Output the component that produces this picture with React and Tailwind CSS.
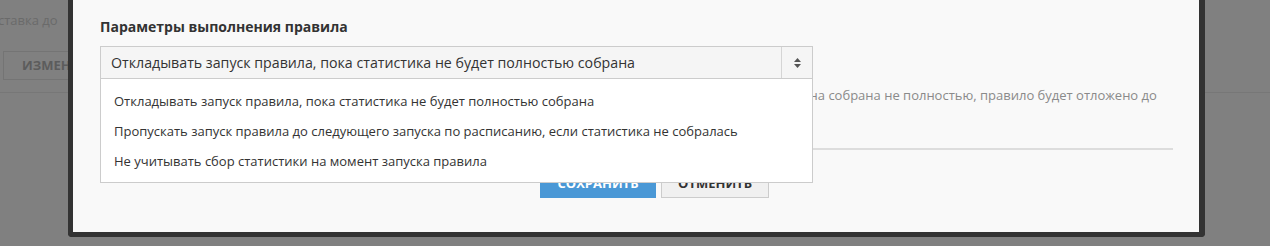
export default function App() {
	const options = [
		"Откладывать запуск правила, пока статистика не будет полностью собрана",
		"Пропускать запуск правила до следующего запуска по расписанию, если статистика не собралась",
		"Не учитывать сбор статистики на момент запуска правила",
	];

	return (
		<div className="relative w-full h-[246px] overflow-hidden bg-[#808080] font-['Open_Sans',sans-serif]">
			{/* Page under the overlay */}
			<div className="pt-[10px]">
				<div className="text-[13px] leading-[20px] text-[#6a6a6a] -ml-[2px]">ставка до</div>
				<div className="mt-[21px] pl-[3px]">
					<div className="inline-flex items-center h-[29px] px-[18px] border border-[#747474] text-[13px] font-bold text-[#5c5c5c]">
						ИЗМЕНИТЬ
					</div>
				</div>
				<div className="mt-[12px] h-px bg-[#777777]" />
			</div>

			{/* Modal */}
			<div className="absolute left-[68px] top-[-10px] w-[1137px] h-[247px] bg-[#f9f9f9] border-l-[5px] border-r-[6px] border-b-[5px] border-[#333333] rounded-b-[4px] pl-[27px] pr-[26px] pt-[27px]">
				<div className="text-[14px] leading-5 font-bold text-[#333333]">
					Параметры выполнения правила
				</div>

				<div className="relative mt-[9px] w-[713px]">
					<div className="flex h-[33px] border border-[#cccccc] bg-[#f5f5f5]">
						<div className="flex-1 flex items-center pl-[10px] text-[14.2px] text-[#333333]">
							{options[0]}
						</div>
						<div className="w-[31px] flex flex-col items-center justify-center gap-[2px] border-l border-[#d5d5d5]">
							<svg width="7" height="4" viewBox="0 0 7 4">
								<path d="M3.5 0L7 4H0z" fill="#555555" />
							</svg>
							<svg width="7" height="4" viewBox="0 0 7 4">
								<path d="M0 0h7L3.5 4z" fill="#555555" />
							</svg>
						</div>
					</div>

					{/* Open dropdown list */}
					<div className="absolute left-0 top-full z-10 w-full bg-white border border-t-0 border-[#cccccc] pt-[8px] pb-[5px]">
						{options.map((o) => (
							<div key={o} className="h-[30px] flex items-center pl-[13px] text-[13px] text-[#333333]">
								{o}
							</div>
						))}
					</div>
				</div>

				<p className="mt-[7px] text-[13px] leading-[18px] text-[#8a8a8a]">
					Если на момент запуска правила статистика для кампании за выбранные периоды пока не была собрана или она собрана не полностью, правило будет отложено до
					<br />
					полного сбора статистики.
				</p>

				<div className="mt-[26px] h-[2px] bg-[#dddddd]" />

				<div className="mt-[19px] flex justify-center gap-[5px] pl-[36px]">
					<div className="w-[116px] h-[29px] flex items-center justify-center bg-[#4a98d6] text-[13px] font-bold text-white">
						СОХРАНИТЬ
					</div>
					<div className="w-[108px] h-[29px] flex items-center justify-center bg-[#f0f0f0] border border-[#cccccc] text-[13px] font-bold text-[#333333]">
						ОТМЕНИТЬ
					</div>
				</div>
			</div>
		</div>
	);
}
